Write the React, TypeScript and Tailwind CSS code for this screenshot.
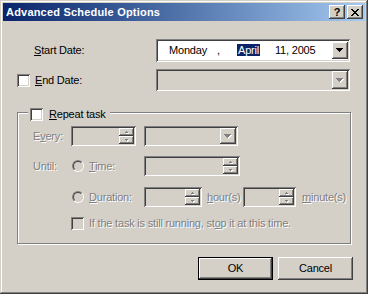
import React from "react";

const sunken =
  "shadow-[inset_1px_1px_#808080,inset_-1px_-1px_#ffffff,inset_2px_2px_#404040,inset_-2px_-2px_#d4d0c8]";
const raised =
  "shadow-[inset_-1px_-1px_#404040,inset_1px_1px_#ffffff,inset_-2px_-2px_#808080,inset_2px_2px_#d4d0c8]";
const dim = "text-[#808080] [text-shadow:1px_1px_0_#ffffff]";

const Arrow = ({ disabled }: { disabled?: boolean }) => (
  <svg width="8" height="5" viewBox="0 0 8 5">
    {disabled && (
      <path
        d="M0 0h7v1h-1v1h-1v1h-1v1h-1v-1h-1v-1h-1v-1h-1z"
        fill="#ffffff"
        transform="translate(1 1)"
      />
    )}
    <path
      d="M0 0h7v1h-1v1h-1v1h-1v1h-1v-1h-1v-1h-1v-1h-1z"
      fill={disabled ? "#808080" : "#000000"}
    />
  </svg>
);

const Tiny = ({ up }: { up?: boolean }) => (
  <svg width="4" height="3" viewBox="0 0 4 3">
    <path
      d={up ? "M1 0h1v1h1v1h-3v-1h1z" : "M0 0h3v1h-1v1h-1v-1h-1z"}
      fill="#ffffff"
      transform="translate(1 1)"
    />
    <path
      d={up ? "M1 0h1v1h1v1h-3v-1h1z" : "M0 0h3v1h-1v1h-1v-1h-1z"}
      fill="#808080"
    />
  </svg>
);

const Check = ({ disabled }: { disabled?: boolean }) => (
  <span
    className={`block w-[13px] h-[13px] shrink-0 ${sunken} ${
      disabled ? "bg-[#d4d0c8]" : "bg-white"
    }`}
  />
);

const Radio = () => (
  <span className="flex w-[12px] h-[12px] shrink-0 items-center justify-center rounded-full border border-t-[#808080] border-l-[#808080] border-b-white border-r-white">
    <span className="block w-[10px] h-[10px] rounded-full border border-t-[#404040] border-l-[#404040] border-b-[#d4d0c8] border-r-[#d4d0c8] bg-[#d4d0c8]" />
  </span>
);

const Spin = ({ w }: { w: string }) => (
  <div className={`${w} h-[20px] flex justify-end p-[2px] bg-[#d4d0c8] ${sunken}`}>
    <div className="flex flex-col w-[15px]">
      <span className={`flex-1 flex items-center justify-center bg-[#d4d0c8] ${raised}`}>
        <Tiny up />
      </span>
      <span className={`flex-1 flex items-center justify-center bg-[#d4d0c8] ${raised}`}>
        <Tiny />
      </span>
    </div>
  </div>
);

const Combo = ({ w, h }: { w: string; h: string }) => (
  <div className={`${w} ${h} flex justify-end p-[2px] bg-[#d4d0c8] ${sunken}`}>
    <span className={`w-[16px] flex items-center justify-center bg-[#d4d0c8] ${raised}`}>
      <Arrow disabled />
    </span>
  </div>
);

const Btn = ({ label, primary }: { label: string; primary?: boolean }) => (
  <button
    className={`w-[75px] h-[23px] bg-[#d4d0c8] text-[11px] text-black ${
      primary
        ? "border border-black shadow-[inset_-1px_-1px_#404040,inset_1px_1px_#ffffff,inset_-2px_-2px_#808080]"
        : raised
    }`}
  >
    {label}
  </button>
);

export default function App() {
  return (
    <div className="w-[368px] h-[294px] flex flex-col bg-[#d4d0c8] text-[11px] tracking-[-0.2px] text-black font-['Liberation_Sans',Arial,sans-serif] shadow-[inset_-1px_-1px_#404040,inset_1px_1px_#d4d0c8,inset_-2px_-2px_#808080,inset_2px_2px_#ffffff]">
      {/* title bar */}
      <div className="mt-[3px] mx-[3px] h-[18px] flex items-center justify-between pl-[3px] pr-[2px] bg-linear-to-r from-[#0a246a] to-[#a6caf0]">
        <span className="font-bold text-white text-[11px] tracking-[0.2px]">
          Advanced Schedule Options
        </span>
        <div className="flex gap-[2px]">
          <span className={`w-[16px] h-[14px] flex items-center justify-center bg-[#d4d0c8] ${raised} font-bold text-[11px] leading-none`}>
            ?
          </span>
          <span className={`w-[16px] h-[14px] flex items-center justify-center bg-[#d4d0c8] ${raised}`}>
            <svg width="8" height="7" viewBox="0 0 8 7">
              <path
                d="M0 0h2v1h1v1h2v-1h1v-1h2v1h-1v1h-1v1h-1v1h1v1h1v1h1v1h-2v-1h-1v-1h-2v1h-1v1h-2v-1h1v-1h1v-1h1v-1h-1v-1h-1v-1h-1z"
                fill="#000000"
              />
            </svg>
          </span>
        </div>
      </div>

      {/* start date */}
      <div className="mt-[18px] h-[23px] flex items-center">
        <div className="w-[156px] pl-[34px]">
          <u>S</u>tart Date:
        </div>
        <div className={`w-[194px] h-[23px] flex items-center justify-between pl-[13px] pr-[2px] bg-white ${sunken}`}>
          <div className="flex items-center">
            <span className="w-[48px]">Monday</span>
            <span className="w-[20px]">,</span>
            <span className="w-[38px]">
              <span className="bg-[#0a246a] text-white px-[1px]">April</span>
            </span>
            <span>11, 2005</span>
          </div>
          <span className={`w-[16px] h-[17px] flex items-center justify-center bg-[#d4d0c8] ${raised}`}>
            <Arrow />
          </span>
        </div>
      </div>

      {/* end date */}
      <div className="mt-[7px] h-[22px] flex items-center">
        <div className="w-[156px] pl-[17px] flex items-center gap-[5px]">
          <Check />
          <span>
            <u>E</u>nd Date:
          </span>
        </div>
        <Combo w="w-[194px]" h="h-[22px]" />
      </div>

      {/* repeat group */}
      <div className="relative mt-[21px] ml-[17px] w-[334px] h-[132px] border border-[#808080] shadow-[inset_1px_1px_#ffffff,1px_1px_#ffffff]">
        <div className="absolute left-[10px] top-[-7px] flex items-center gap-[6px] px-[2px] pr-[4px] bg-[#d4d0c8]">
          <Check />
          <span>
            <u>R</u>epeat task
          </span>
        </div>

        <div className="flex flex-col pl-[15px] pt-[13px]">
          <div className="h-[20px] flex items-center">
            <span className={`w-[38px] ${dim}`}>
              E<u>v</u>ery:
            </span>
            <Spin w="w-[65px]" />
            <div className="ml-[8px]">
              <Combo w="w-[94px]" h="h-[20px]" />
            </div>
          </div>

          <div className="mt-[10px] h-[20px] flex items-center">
            <span className={`w-[38px] ${dim}`}>Until:</span>
            <div className="w-[73px] flex items-center pl-[1px] gap-[5px]">
              <Radio />
              <span className={dim}>
                <u>T</u>ime:
              </span>
            </div>
            <Spin w="w-[96px]" />
          </div>

          <div className="mt-[11px] h-[20px] flex items-center">
            <span className="w-[38px]" />
            <div className="w-[73px] flex items-center pl-[1px] gap-[5px]">
              <Radio />
              <span className={dim}>
                <u>D</u>uration:
              </span>
            </div>
            <Spin w="w-[58px]" />
            <span className={`ml-[5px] w-[36px] ${dim}`}>
              <u>h</u>our(s)
            </span>
            <Spin w="w-[53px]" />
            <span className={`ml-[6px] ${dim}`}>
              <u>m</u>inute(s)
            </span>
          </div>

          <div className="mt-[10px] h-[13px] flex items-center">
            <span className="w-[38px]" />
            <Check disabled />
            <span className={`ml-[5px] ${dim}`}>
              If the task is still running, st<u>o</u>p it at this time.
            </span>
          </div>
        </div>
      </div>

      {/* buttons */}
      <div className="mt-[13px] flex justify-end gap-[5px] pr-[15px]">
        <Btn label="OK" primary />
        <Btn label="Cancel" />
      </div>
    </div>
  );
}
